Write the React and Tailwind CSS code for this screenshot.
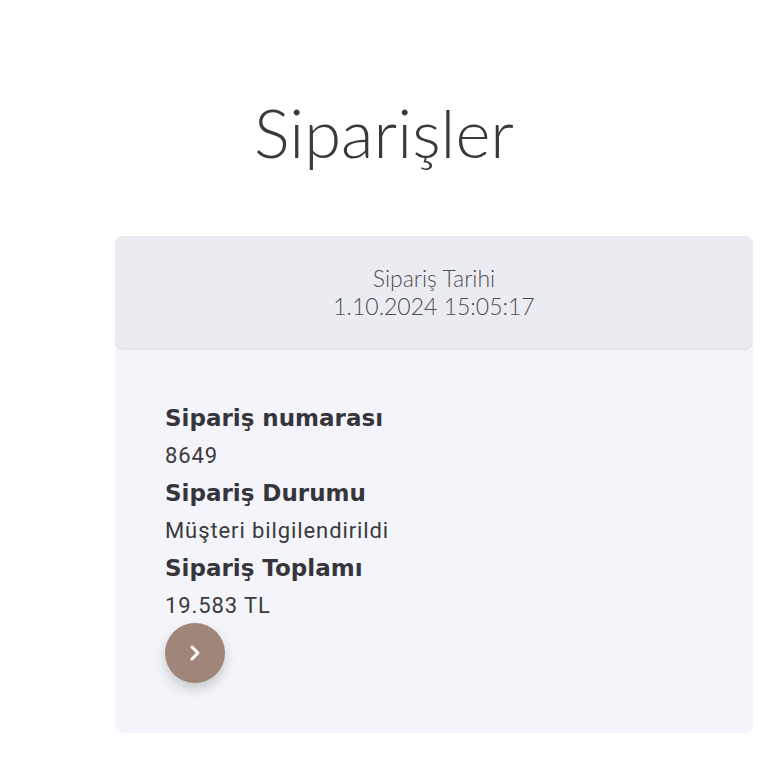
import { FiChevronRight } from 'react-icons/fi';

const rows = [
    { label: 'Sipariş numarası', value: '8649' },
    { label: 'Sipariş Durumu', value: 'Müşteri bilgilendirildi' },
    { label: 'Sipariş Toplamı', value: '19.583 TL' },
];

const App = () => {
    return (
        <div className="min-h-screen bg-white font-['Lato','Noto_Sans',sans-serif] text-[#3d3d40]">
            <h1 className="pt-[92px] text-center text-[67px] leading-[80px] font-light text-[#3a3a3a]">
                Siparişler
            </h1>

            <div className="ml-[115px] mr-[15px] mt-[64px] rounded-lg overflow-hidden bg-[#f4f5fa]">
                <div className="h-[112px] bg-[#ebecf1] rounded-lg shadow-sm flex flex-col items-center justify-center text-[23px] leading-[28px] font-light text-[#4e4e52]">
                    <p>Sipariş Tarihi</p>
                    <p>1.10.2024 15:05:17</p>
                </div>

                <div className="pl-[50px] pt-[52px] pb-[50px]">
                    {rows.map((r) => (
                        <div key={r.label}>
                            <p className="font-['DejaVu_Sans',sans-serif] text-[23px] leading-[37px] font-bold text-[#36353c]">{r.label}</p>
                            <p className="font-['Roboto',sans-serif] text-[22px] leading-[38px] tracking-[0.9px] text-[#3a3a3e]">{r.value}</p>
                        </div>
                    ))}
                    <button className="-mt-[2px] w-[60px] h-[60px] rounded-full bg-[#a08679] text-white flex items-center justify-center shadow-[0_6px_12px_rgba(0,0,0,0.18)]">
                        <FiChevronRight size={24} strokeWidth={3} />
                    </button>
                </div>
            </div>
        </div>
    );
};

export default App;
